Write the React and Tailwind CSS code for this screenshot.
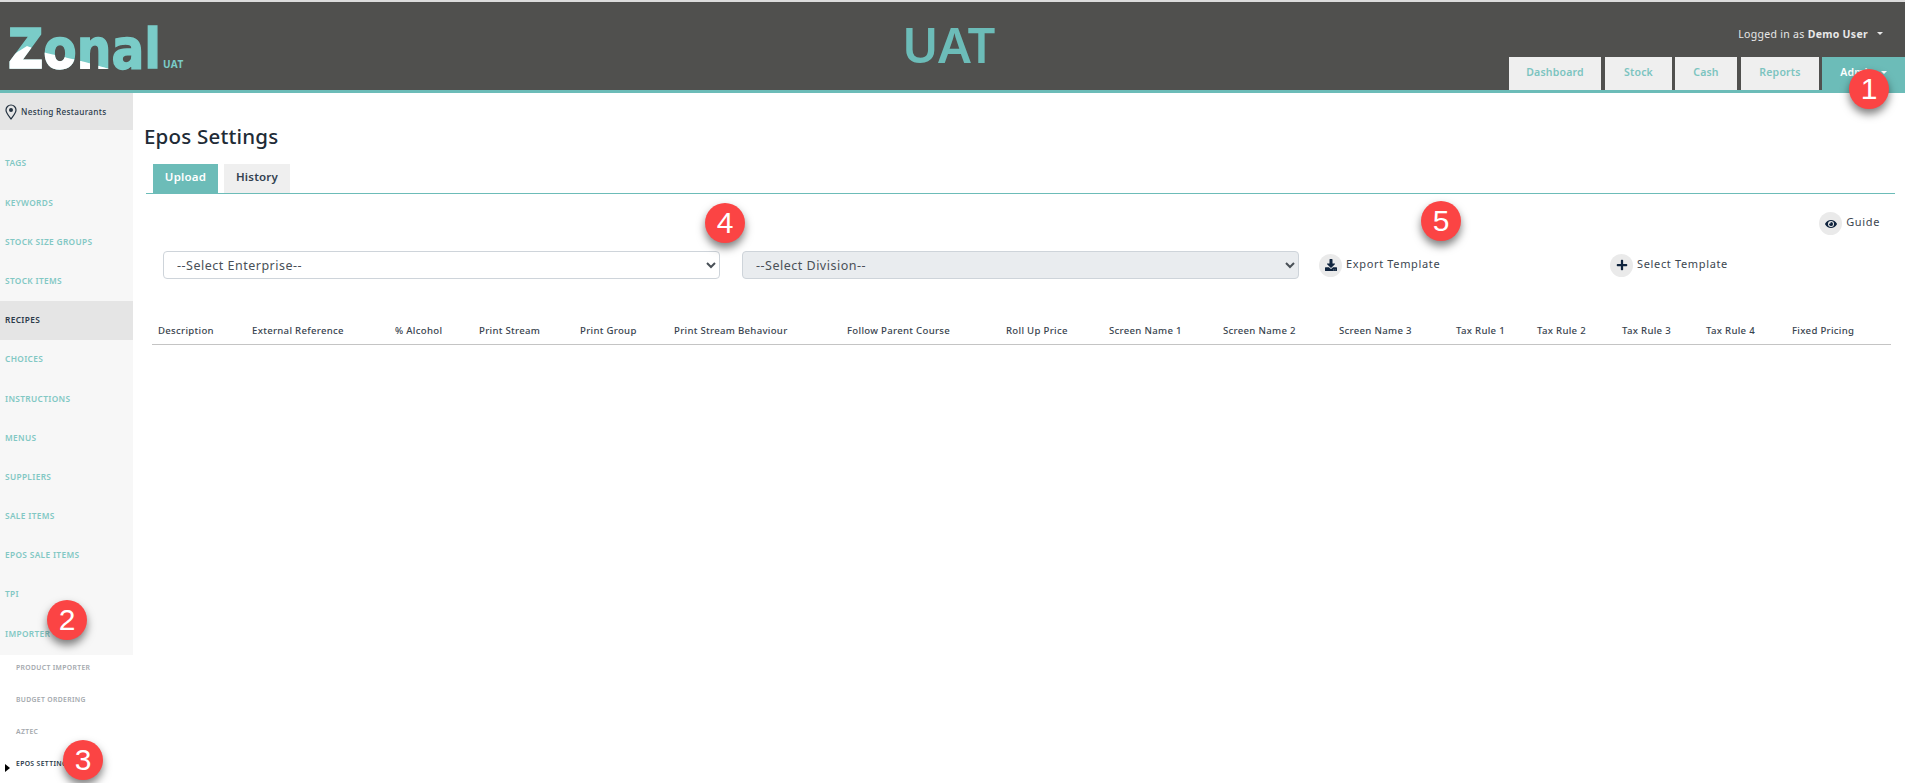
import React from 'react';
import { FaDownload, FaEye, FaPlus } from 'react-icons/fa';

const navItems = [
  { label: 'Dashboard', cls: 'w-[92px]' },
  { label: 'Stock', cls: 'w-[67px] ml-[1px]' },
  { label: 'Cash', cls: 'w-[62px]' },
  { label: 'Reports', cls: 'w-[78px] ml-[1px]' },
];
const sideItems = ['TAGS', 'KEYWORDS', 'STOCK SIZE GROUPS', 'STOCK ITEMS', 'RECIPES', 'CHOICES', 'INSTRUCTIONS', 'MENUS', 'SUPPLIERS', 'SALE ITEMS', 'EPOS SALE ITEMS', 'TPI', 'IMPORTER'];
const subItems = ['PRODUCT IMPORTER', 'BUDGET ORDERING', 'AZTEC', 'EPOS SETTINGS'];
const columns = ['Description', 'External Reference', '% Alcohol', 'Print Stream', 'Print Group', 'Print Stream Behaviour', 'Follow Parent Course', 'Roll Up Price', 'Screen Name 1', 'Screen Name 2', 'Screen Name 3', 'Tax Rule 1', 'Tax Rule 2', 'Tax Rule 3', 'Tax Rule 4', 'Fixed Pricing'];

function Logo() {
  return (
    <svg width="190" height="80" viewBox="0 0 190 80" className="block">
      <defs>
        <clipPath id="zonal-low">
          <polygon points="0,56 19,44 34,50 77,60 105,68 105,72 0,72" />
        </clipPath>
      </defs>
      <text x="0" y="66" fontFamily="'DejaVu Sans', sans-serif" fontWeight="700" fontSize="56" textLength="153" lengthAdjust="spacingAndGlyphs" fill="#7accc8" stroke="#7accc8" strokeWidth="1.5">Zonal</text>
      <text x="0" y="66" fontFamily="'DejaVu Sans', sans-serif" fontWeight="700" fontSize="56" textLength="153" lengthAdjust="spacingAndGlyphs" fill="#ffffff" stroke="#ffffff" strokeWidth="1.5" clipPath="url(#zonal-low)">Zonal</text>
      <text x="155" y="66" fontFamily="'Noto Sans', sans-serif" fontWeight="700" fontSize="10" letterSpacing="0.4" fill="#7accc8">UAT</text>
    </svg>
  );
}

function Marker({ n, className }) {
  return (
    <div className={`absolute w-10 h-10 rounded-full bg-[#fb4444] text-white flex items-center justify-center text-[30px] leading-none shadow-[0_5px_9px_rgba(0,0,0,0.5)] font-['Liberation_Sans',sans-serif] ${className}`}>
      {n}
    </div>
  );
}

function IconAction({ icon, label, className }) {
  return (
    <div className={`flex items-center gap-[4px] text-[11px] tracking-[0.65px] text-[#3c4650] ${className}`}>
      <span className="w-[23px] h-[23px] rounded-full bg-[#eaeaea] flex items-center justify-center text-[#10243e]">{icon}</span>
      <span className="relative top-[-1px]">{label}</span>
    </div>
  );
}

export default function App() {
  return (
    <div className="relative w-[1905px] h-[783px] overflow-hidden bg-white font-['Noto_Sans',sans-serif]">
      <div className="h-[2px] bg-[#dcdcdc]" />
      <header className="relative h-[91px] bg-[#50504e] border-b-[3px] border-[#6cbcb8] flex justify-between">
        <div className="pl-2"><Logo /></div>
        <div className="absolute left-[902px] top-[12px] text-[49px] leading-[60px] font-semibold text-[#6cbcb8]">UAT</div>
        <div className="flex flex-col items-end">
          <div className="h-[55px] pt-[24px] pr-[22px] text-[10.5px] leading-[16px] tracking-[0.3px] text-[#e8e8e8] flex gap-[9px]">
            <span>Logged in as <b className="font-bold">Demo User</b></span>
            <span className="mt-[6px] w-0 h-0 border-x-[3px] border-x-transparent border-t-[3px] border-t-[#e8e8e8]" />
          </div>
          <nav className="flex gap-[3px] h-[33px] text-[10.5px] font-semibold tracking-[0.2px]">
            {navItems.map((item) => (
              <div key={item.label} className={`${item.cls} bg-[#efefef] text-[#7cc4c0] flex items-center justify-center pb-[2px]`}>{item.label}</div>
            ))}
            <div className="w-[83px] bg-[#6cbcb8] text-white flex items-center justify-center gap-[6px] pb-[2px]">
              Admin
              <span className="w-0 h-0 border-x-[3px] border-x-transparent border-t-[3px] border-t-white" />
            </div>
          </nav>
        </div>
      </header>

      <div className="flex">
        <aside className="w-[133px] shrink-0">
          <div className="h-[37px] bg-[#e5e5e5] flex items-center pl-[5px] gap-[4px] text-[8.2px] font-medium tracking-[0.3px] text-[#2b3a4a]">
            <svg width="12" height="16" viewBox="0 0 12 16" fill="none" className="shrink-0">
              <path d="M6 15C3.500 11.500 1 9 1 6a5 5 0 0 1 10 0c0 3-2.500 5.500-5 9Z" stroke="#243240" strokeWidth="1.2" />
              <circle cx="6" cy="6" r="2" fill="#243240" />
            </svg>
            <span className="relative top-[1px]">Nesting Restaurants</span>
          </div>
          <div className="bg-[#f7f7f7] pt-[14px] pb-[2px]">
            {sideItems.map((item) => (
              <div key={item} className={`h-[39.2px] pl-[5px] flex items-center text-[8.3px] font-semibold tracking-[0.35px] ${item === 'RECIPES' ? 'bg-[#e5e5e5] text-[#2b3a4a]' : 'text-[#82c8c4]'}`}>{item}</div>
            ))}
          </div>
          <div className="-mt-[3px]">
            {subItems.map((item) => (
              <div key={item} className={`relative h-[32px] pl-[16px] flex items-center text-[6.8px] font-semibold tracking-[0.35px] ${item === 'EPOS SETTINGS' ? 'text-[#2b3a4a]' : 'text-[#a3a8ad]'}`}>
                {item === 'EPOS SETTINGS' && <span className="absolute left-[5px] top-[16px] w-0 h-0 border-y-[4px] border-y-transparent border-l-[5px] border-l-black" />}
                {item}
              </div>
            ))}
          </div>
        </aside>

        <main className="flex-1 pl-[11px] pr-[10px]">
          <h1 className="pt-[27px] text-[20.5px] leading-[32px] font-medium tracking-[0.2px] text-[#212b36]">Epos Settings</h1>
          <div className="mt-[12px] ml-[2px] flex gap-[6px] pl-[7px] h-[30px] border-b border-[#6cbcb8] text-[11.5px] font-semibold tracking-[0.2px]">
            <div className="w-[65px] h-[29px] bg-[#6cbcb8] text-white flex items-center justify-center pb-[3px]">Upload</div>
            <div className="w-[66px] h-[29px] bg-[#efefef] text-[#33414f] flex items-center justify-center pb-[3px]">History</div>
          </div>

          <div className="flex justify-end pt-[15px] pr-[15px] h-[44px]">
            <IconAction icon={<FaEye size={12} />} label="Guide" />
          </div>

          <div className="flex items-center pl-[19px] mt-[13px]">
            <select className="w-[557px] h-[28px] pl-[9px] bg-white border border-[#ced4da] rounded-[4px] text-[12.5px] tracking-[0.5px] text-[#495057]">
              <option>--Select Enterprise--</option>
            </select>
            <select disabled className="ml-[22px] w-[557px] h-[28px] pl-[9px] bg-[#e9ecef] border border-[#ced4da] rounded-[4px] text-[12.5px] tracking-[0.5px] text-[#495057] opacity-100">
              <option>--Select Division--</option>
            </select>
            <IconAction icon={<FaDownload size={12} />} label="Export Template" className="ml-[20px] w-[291px]" />
            <IconAction icon={<FaPlus size={12} />} label="Select Template" />
          </div>

          <div className="mt-[37px] ml-[8px] w-[1739px] h-[29px] border-b border-[#c4c4c4] grid grid-cols-[94px_143px_84px_101px_94px_173px_159px_103px_114px_116px_117px_81px_85px_84px_86px_99px] text-[9.6px] font-medium tracking-[0.3px] text-[#38434e]">
            {columns.map((c) => (
              <div key={c} className="pl-[6px] leading-[29px] whitespace-nowrap">{c}</div>
            ))}
          </div>
        </main>
      </div>

      <Marker n="1" className="left-[1849px] top-[69px]" />
      <Marker n="2" className="left-[47px] top-[600px]" />
      <Marker n="3" className="left-[63px] top-[740px]" />
      <Marker n="4" className="left-[705px] top-[203px]" />
      <Marker n="5" className="left-[1421px] top-[201px]" />
    </div>
  );
}
